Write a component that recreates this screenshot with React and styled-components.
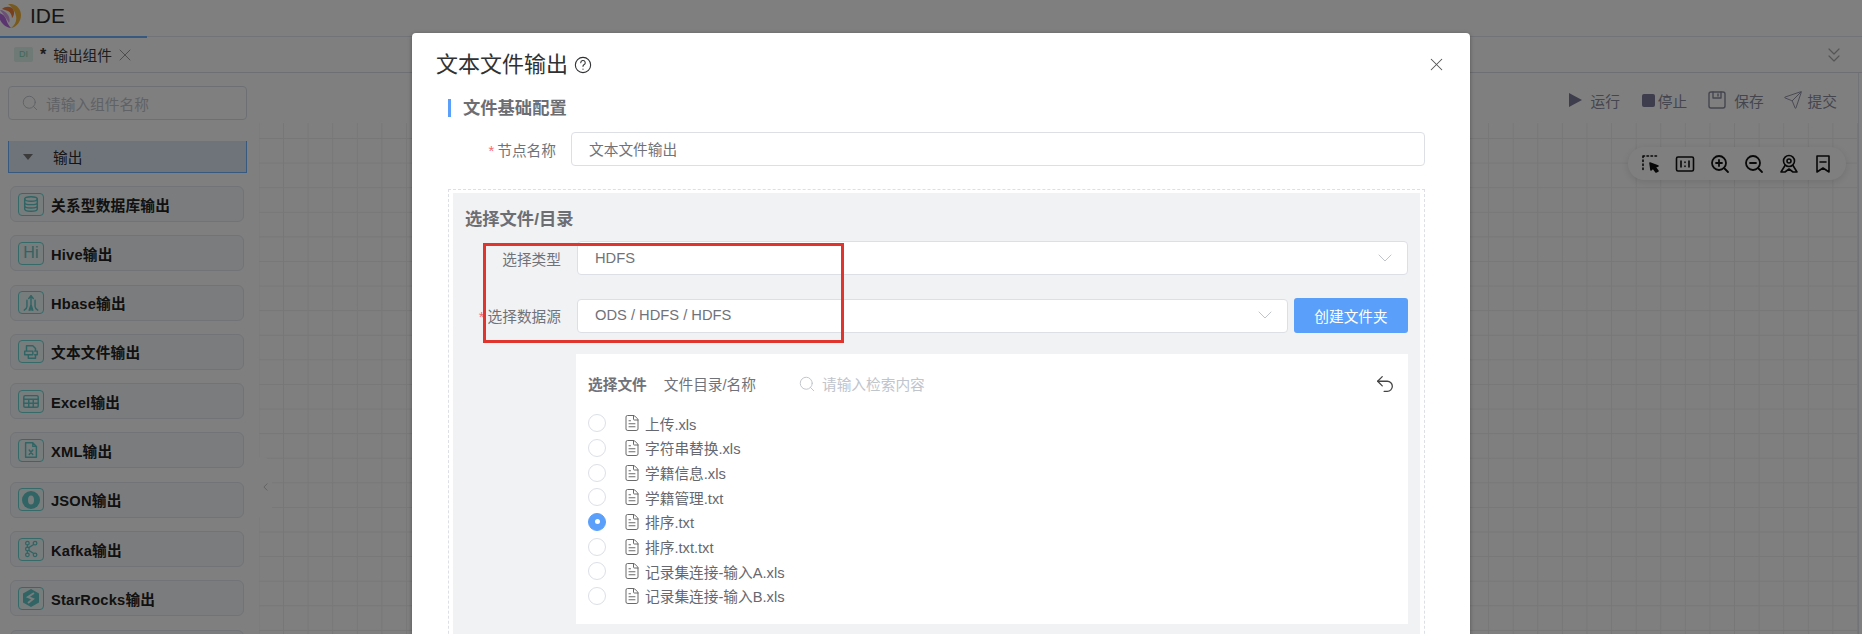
import styled, { createGlobalStyle } from "styled-components";
import { ChevronsDown, ChevronDown, ChevronLeft, Search, X, Undo2, FileText, Send } from "lucide-react";

const Global = createGlobalStyle`
  html, body { margin: 0; padding: 0; height: 100%; overflow: hidden; }
  body { font-family: "Liberation Sans", "Noto Sans CJK SC", sans-serif; background: #fff; }
  * { box-sizing: border-box; }
`;

const Page = styled.div`
  position: relative;
  height: 634px;
  display: flex;
  flex-direction: column;
  overflow: hidden;
  color: #303133;
`;

const TopBar = styled.header`
  height: 37px;
  flex: none;
  display: flex;
  align-items: center;
  gap: 9px;
  padding-bottom: 5px;
  border-bottom: 1px solid #e4e7ed;
`;
const AppName = styled.span`
  font-size: 21px;
  color: #2a2a2a;
`;

const TabBar = styled.div`
  height: 36px;
  flex: none;
  display: flex;
  align-items: center;
  justify-content: space-between;
  padding-right: 16px;
  border-bottom: 1px solid #dcdfe6;
`;
const Tab = styled.div`
  position: relative;
  width: 147px;
  height: 100%;
  display: flex;
  align-items: center;
  padding-left: 14px;
  font-size: 14.7px;
  color: #3a3a3a;
  &::before {
    content: "";
    position: absolute;
    left: 0;
    right: 0;
    top: -1px;
    height: 2px;
    background: #6fb0ff;
  }
`;
const TabBadge = styled.span`
  width: 19px;
  height: 15px;
  margin-right: 7px;
  border-radius: 2px;
  background: #dff3ec;
  color: #7fd0b4;
  font-size: 9px;
  line-height: 15px;
  text-align: center;
`;
const TabStar = styled.b`
  margin-right: 7px;
  font-size: 16px;
`;
const TabClose = styled(X)`
  margin-left: 3px;
  color: #888;
`;

const Main = styled.div`
  flex: 1;
  display: flex;
  min-height: 0;
  padding-right: 3px;
`;

const Sidebar = styled.aside`
  width: 259px;
  flex: none;
  padding: 13px 12px 0 8px;
`;
const SearchBox = styled.div`
  height: 34px;
  display: flex;
  align-items: center;
  gap: 7px;
  padding-left: 12px;
  border: 1px solid #dcdfe6;
  border-radius: 4px;
  font-size: 14.7px;
  color: #c0c4cc;
`;
const GroupHead = styled.div`
  height: 32px;
  margin-top: 21px;
  display: flex;
  align-items: center;
  padding-left: 14px;
  background: #dfe8f6;
  border: 1px solid #6fb0ff;
  border-top: none;
  font-size: 14.7px;
  color: #2a2a2a;
`;
const Caret = styled.span`
  width: 0;
  height: 0;
  margin-right: 20px;
  border: 5px solid transparent;
  border-top: 6px solid #777;
  border-bottom: none;
`;
const ItemList = styled.div`
  display: flex;
  flex-direction: column;
  gap: 13.3px;
  margin: 13px 3px 0 2px;
`;
const Item = styled.div`
  height: 36px;
  flex: none;
  display: flex;
  align-items: center;
  gap: 7px;
  padding-left: 7px;
  border: 1px solid #e4e7ed;
  border-radius: 6px;
  background: #f6f8fa;
  font-size: 14.7px;
  font-weight: 700;
  color: #222;
  letter-spacing: 0.2px;
`;
const ItemIcon = styled.span`
  width: 26px;
  height: 23px;
  flex: none;
  display: flex;
  align-items: center;
  justify-content: center;
  border: 1px solid #69d4d4;
  border-radius: 4px;
  background: #eef9f9;
  color: #62c8c8;
  font-size: 16px;
  font-weight: 400;
`;

const Content = styled.section`
  flex: 1;
  min-width: 0;
  display: flex;
  flex-direction: column;
  border-right: 1px solid #e4e7ed;
`;
const ActionBar = styled.div`
  height: 50px;
  flex: none;
  display: flex;
  align-items: center;
  justify-content: flex-end;
  padding: 4px 21px 0 0;
  font-size: 14.7px;
  color: #8a8aa0;
`;
const Action = styled.span`
  display: flex;
  align-items: center;
  gap: ${(p) => p.$gap}px;
  margin-left: ${(p) => p.$ml || 0}px;
`;
const PlayMark = styled.i`
  width: 0;
  height: 0;
  border-left: 13px solid #7a7a9a;
  border-top: 7.5px solid transparent;
  border-bottom: 7.5px solid transparent;
`;
const StopMark = styled.i`
  width: 13px;
  height: 13px;
  border-radius: 2px;
  background: #7a7a9a;
`;
const Canvas = styled.div`
  position: relative;
  flex: 1;
  background-color: #fff;
  background-image: linear-gradient(#efefef 1px, transparent 1px),
    linear-gradient(90deg, #efefef 1px, transparent 1px);
  background-size: 24.6px 24.6px;
  background-position: 24px 15px;
`;
const Pill = styled.div`
  position: absolute;
  top: 24px;
  right: 12px;
  width: 218px;
  height: 33px;
  display: flex;
  align-items: center;
  justify-content: space-between;
  padding: 0 13px;
  border-radius: 17px;
  background: #fff;
  box-shadow: 0 2px 8px rgba(0, 0, 0, 0.12);
  color: #111;
`;
const CollapseHandle = styled.div`
  position: absolute;
  left: 0;
  top: 334px;
  width: 13px;
  height: 60px;
  display: flex;
  align-items: center;
  justify-content: flex-start;
  border-radius: 0 10px 10px 0;
  background: #fff;
  color: #aaa;
`;

const Mask = styled.div`
  position: absolute;
  inset: 0;
  padding: 33px 0 0 412px;
  background: rgba(0, 0, 0, 0.5);
`;
const Modal = styled.div`
  position: relative;
  width: 1058px;
  height: 640px;
  padding: 0 45px 0 36px;
  border-radius: 4px 4px 0 0;
  background: #fff;
  box-shadow: 0 1px 4px rgba(0, 0, 0, 0.35);
`;
const ModalHead = styled.div`
  height: 64px;
  margin-left: -12px;
  display: flex;
  align-items: center;
  gap: 6px;
  font-size: 22px;
  line-height: 26px;
  color: #303133;
`;
const CloseBtn = styled(X)`
  position: absolute;
  top: 21px;
  right: 23px;
  color: #555;
`;
const SectionTitle = styled.h3`
  margin: 2px 0 15px;
  height: 18px;
  padding-left: 12px;
  display: flex;
  align-items: center;
  border-left: 3px solid #5a9ffa;
  font-size: 17.3px;
  line-height: 18px;
  font-weight: 700;
  color: #6c6e72;
`;
const Row = styled.div`
  display: flex;
  flex: ${(p) => (p.$grow ? 1 : "none")};
  align-items: center;
  gap: ${(p) => p.$gap || 15}px;
  margin-bottom: ${(p) => p.$mb || 0}px;
`;
const Label = styled.label`
  width: ${(p) => p.$w}px;
  flex: none;
  text-align: right;
  font-size: 14.7px;
  color: #70727a;
  white-space: nowrap;
  &::before {
    content: ${(p) => (p.$required ? '"*"' : "none")};
    margin-right: 3px;
    color: #f56c6c;
  }
`;
const Field = styled.div`
  flex: 1;
  height: 34px;
  display: flex;
  align-items: center;
  justify-content: space-between;
  padding: 0 10px 1px 17px;
  border: 1px solid #dcdfe6;
  border-radius: 4px;
  background: #fff;
  font-size: 14.7px;
  color: #70727a;
`;
const Dashed = styled.div`
  margin-top: 23px;
  padding: 3px 4px 0;
  height: 500px;
  border: 1px dashed #dcdfe6;
  border-bottom: none;
`;
const GrayBox = styled.div`
  height: 100%;
  padding: 16px 12px 0 12px;
  background: #f1f2f4;
`;
const GrayTitle = styled.h4`
  margin: 0 0 12px;
  height: 20px;
  font-size: 17.3px;
  line-height: 20px;
  font-weight: 700;
  color: #6c6e72;
`;
const PrimaryBtn = styled.button`
  width: 114px;
  height: 35px;
  flex: none;
  border: none;
  border-radius: 3px;
  background: #5a9ffa;
  color: #fff;
  font: inherit;
  font-size: 14.7px;
`;
const FilePanel = styled.div`
  height: 270px;
  margin: 21px 0 0 111px;
  padding: 19px 12px 0 12px;
  background: #fff;
`;
const PanelHead = styled.div`
  height: 21px;
  display: flex;
  align-items: center;
  font-size: 14.7px;
  color: #70727a;
`;
const PanelTitle = styled.b`
  margin-right: 17px;
`;
const PanelSearch = styled.span`
  margin-left: 42px;
  display: flex;
  align-items: center;
  gap: 6px;
  color: #c0c4cc;
`;
const BackBtn = styled(Undo2)`
  margin-left: auto;
  color: #444;
`;
const FileList = styled.ul`
  list-style: none;
  margin: 17px 0 0;
  padding: 0;
`;
const FileRow = styled.li`
  height: 24.67px;
  display: flex;
  align-items: center;
  font-size: 14.7px;
  color: #666870;
`;
const Radio = styled.span`
  width: 18px;
  height: 18px;
  flex: none;
  margin-right: 17px;
  border-radius: 50%;
  border: 1px solid ${(p) => (p.$on ? "#5a9ffa" : "#dcdfe6")};
  background: ${(p) => (p.$on ? "#5a9ffa" : "#fff")};
  display: flex;
  align-items: center;
  justify-content: center;
  &::after {
    content: "";
    width: 5px;
    height: 5px;
    border-radius: 50%;
    background: ${(p) => (p.$on ? "#fff" : "transparent")};
  }
`;
const DocIcon = styled(FileText)`
  flex: none;
  margin-right: 4px;
  color: #666;
`;
const RedBox = styled.div`
  position: absolute;
  left: 71px;
  top: 210px;
  width: 361px;
  height: 100px;
  border: 3px solid #e0352f;
  pointer-events: none;
`;

const Logo = () => (
  <svg width="21" height="24" viewBox="0 0 21 24">
    <path d="M8 0c7-1 13 4 13 11 0 6-4 12-10 13 4-3 6-7 5-12C15 7 12 3 8 0z" fill="#f2b53c" />
    <path d="M2 5c3-3 9-3 11 0 2 3 1 7-1 9 0-3-2-6-4-7-2-1-4-1-6-2z" fill="#ef7f3a" />
    <path d="M-2 9c1 7 5 14 13 15-3-3-4-6-5-9-1-3-4-6-8-6z" fill="#b66be0" />
    <path d="M0 6c3 0 6 2 8 5 2 3 2 6 1 8-2-4-5-8-9-13z" fill="#d8a0ea" />
  </svg>
);

const Stroke = ({ size = 18, w = 1.6, children }) => (
  <svg width={size} height={size} viewBox="0 0 20 20" fill="none" stroke="currentColor" strokeWidth={w} strokeLinecap="round" strokeLinejoin="round">
    {children}
  </svg>
);

const sideIcons = {
  db: (
    <Stroke>
      <ellipse cx="10" cy="4.5" rx="7" ry="2.5" />
      <path d="M3 4.5v11c0 1.4 3 2.5 7 2.5s7-1.1 7-2.5v-11M3 8.2c0 1.4 3 2.5 7 2.5s7-1.1 7-2.5M3 12c0 1.4 3 2.5 7 2.5s7-1.1 7-2.5" />
    </Stroke>
  ),
  hbase: (
    <Stroke>
      <path d="M10 2v16M10 2 7.5 5M10 2l2.5 3M5.5 7v7c0 2-1.5 3-3 4M14.5 7v7c0 2 1.5 3 3 4M10 12l-2 6M10 12l2 6" />
    </Stroke>
  ),
  text: (
    <Stroke>
      <path d="M5 9V3h7l3 3v3M3 9h9v4H3zM7 13v4h8v-4M14 9h3v4h-3" />
    </Stroke>
  ),
  table: (
    <Stroke>
      <rect x="2" y="4" width="16" height="13" rx="1.5" />
      <path d="M2 8h16M2 12.5h16M7.5 8v9M12.5 8v9" />
    </Stroke>
  ),
  xml: (
    <Stroke>
      <path d="M4 2h8l4 4v12H4zM12 2v4h4M8 10l4 5M12 10l-4 5" />
    </Stroke>
  ),
  json: (
    <svg width="20" height="20" viewBox="0 0 20 20">
      <circle cx="10" cy="10" r="9" fill="currentColor" />
      <ellipse cx="10" cy="10" rx="3" ry="4.5" fill="#eef9f9" />
    </svg>
  ),
  kafka: (
    <Stroke w={1.4}>
      <circle cx="6" cy="3.5" r="2" />
      <circle cx="14.5" cy="3.5" r="2" />
      <circle cx="6" cy="16.5" r="2" />
      <circle cx="14.5" cy="16.5" r="2" />
      <circle cx="6" cy="10" r="2" />
      <path d="M6 5.5V8M6 12v2.5M7.5 8.5 13 5M7.5 11.5 13 15" />
    </Stroke>
  ),
  star: (
    <svg width="20" height="20" viewBox="0 0 20 20">
      <path d="M10 1l8 4.5v9L10 19l-8-4.5v-9z" fill="currentColor" />
      <path d="M13 5 7 9l5 2-5 4" fill="none" stroke="#eef9f9" strokeWidth="2" />
    </svg>
  ),
};

const sideItems = [
  { icon: sideIcons.db, name: "关系型数据库输出" },
  { icon: "Hi", name: "Hive输出" },
  { icon: sideIcons.hbase, name: "Hbase输出" },
  { icon: sideIcons.text, name: "文本文件输出" },
  { icon: sideIcons.table, name: "Excel输出" },
  { icon: sideIcons.xml, name: "XML输出" },
  { icon: sideIcons.json, name: "JSON输出" },
  { icon: sideIcons.kafka, name: "Kafka输出" },
  { icon: sideIcons.star, name: "StarRocks输出" },
  { icon: sideIcons.db, name: "" },
];

const files = [
  "上传.xls",
  "字符串替换.xls",
  "学籍信息.xls",
  "学籍管理.txt",
  "排序.txt",
  "排序.txt.txt",
  "记录集连接-输入A.xls",
  "记录集连接-输入B.xls",
];

const App = () => {
  return (
    <Page>
      <Global />
      <TopBar>
        <Logo />
        <AppName>IDE</AppName>
      </TopBar>
      <TabBar>
        <Tab>
          <TabBadge>DI</TabBadge>
          <TabStar>*</TabStar>
          输出组件
          <TabClose size={20} strokeWidth={1} />
        </Tab>
        <ChevronsDown size={24} color="#aaa" strokeWidth={1.2} />
      </TabBar>
      <Main>
        <Sidebar>
          <SearchBox>
            <Search size={18} strokeWidth={1.3} />
            请输入组件名称
          </SearchBox>
          <GroupHead>
            <Caret />
            输出
          </GroupHead>
          <ItemList>
            {sideItems.map((item, i) => (
              <Item key={i}>
                <ItemIcon>{item.icon}</ItemIcon>
                {item.name}
              </Item>
            ))}
          </ItemList>
        </Sidebar>
        <Content>
          <ActionBar>
            <Action $gap={8}>
              <PlayMark />
              运行
            </Action>
            <Action $gap={3} $ml={22}>
              <StopMark />
              停止
            </Action>
            <Action $gap={7} $ml={20}>
              <Stroke size={20} w={1.4}>
                <rect x="2" y="2" width="16" height="16" rx="2" />
                <path d="M6 2v6h8V2M11 4v2" />
              </Stroke>
              保存
            </Action>
            <Action $gap={5} $ml={19}>
              <Send size={20} strokeWidth={1.1} />
              提交
            </Action>
          </ActionBar>
          <Canvas>
            <Pill>
              <Stroke size={20}>
                <path d="M2 2h15M2 2v15" strokeDasharray="1.5 2.5" />
                <path d="M9 9l8 3-3 1 3 4-2 1-3-4-2 2z" fill="currentColor" />
              </Stroke>
              <Stroke size={20}>
                <rect x="1.5" y="3" width="17" height="14" rx="1.5" />
                <path d="M6 7v6M14 7v6M10 8v.5M10 12v.5" />
              </Stroke>
              <Stroke size={20} w={1.8}>
                <circle cx="9" cy="9" r="7" />
                <path d="M14 14l4 4M6 9h6M9 6v6" />
              </Stroke>
              <Stroke size={20} w={1.8}>
                <circle cx="9" cy="9" r="7" />
                <path d="M14 14l4 4M6 9h6" />
              </Stroke>
              <Stroke size={20}>
                <circle cx="10" cy="7" r="5.5" />
                <circle cx="10" cy="7" r="2" />
                <path d="M6 11.5 2 18h4l4-3 4 3h4l-4-6.5" />
              </Stroke>
              <Stroke size={20}>
                <path d="M4 2h12v16l-6-4-6 4zM7 8h6" />
              </Stroke>
            </Pill>
            <CollapseHandle>
              <ChevronLeft size={16} strokeWidth={1.2} />
            </CollapseHandle>
          </Canvas>
        </Content>
      </Main>
      <Mask>
        <Modal>
          <ModalHead>
            文本文件输出
            <Stroke size={18} w={1.2}>
              <circle cx="10" cy="10" r="8.5" />
              <path d="M7.5 7.5a2.5 2.5 0 1 1 3.5 2.3c-.7.4-1 .8-1 1.7M10 14.5v.3" />
            </Stroke>
          </ModalHead>
          <CloseBtn size={21} strokeWidth={1.2} />
          <SectionTitle>文件基础配置</SectionTitle>
          <Row>
            <Label $w={108} $required>节点名称</Label>
            <Field>文本文件输出</Field>
          </Row>
          <Dashed>
            <GrayBox>
              <GrayTitle>选择文件/目录</GrayTitle>
              <Row $gap={16} $mb={23}>
                <Label $w={96}>选择类型</Label>
                <Field>
                  HDFS
                  <ChevronDown size={24} color="#c0c4cc" strokeWidth={1} />
                </Field>
              </Row>
              <Row $gap={16}>
                <Label $w={96} $required>选择数据源</Label>
                <Row $gap={6} $grow>
                  <Field>
                    ODS / HDFS / HDFS
                    <ChevronDown size={24} color="#c0c4cc" strokeWidth={1} />
                  </Field>
                  <PrimaryBtn>创建文件夹</PrimaryBtn>
                </Row>
              </Row>
              <FilePanel>
                <PanelHead>
                  <PanelTitle>选择文件</PanelTitle>
                  文件目录/名称
                  <PanelSearch>
                    <Search size={18} strokeWidth={1.3} />
                    请输入检索内容
                  </PanelSearch>
                  <BackBtn size={22} strokeWidth={1.4} />
                </PanelHead>
                <FileList>
                  {files.map((name) => (
                    <FileRow key={name}>
                      <Radio $on={name === "排序.txt"} />
                      <DocIcon size={18} strokeWidth={1.3} />
                      {name}
                    </FileRow>
                  ))}
                </FileList>
              </FilePanel>
            </GrayBox>
          </Dashed>
          <RedBox />
        </Modal>
      </Mask>
    </Page>
  );
};

export default App;
